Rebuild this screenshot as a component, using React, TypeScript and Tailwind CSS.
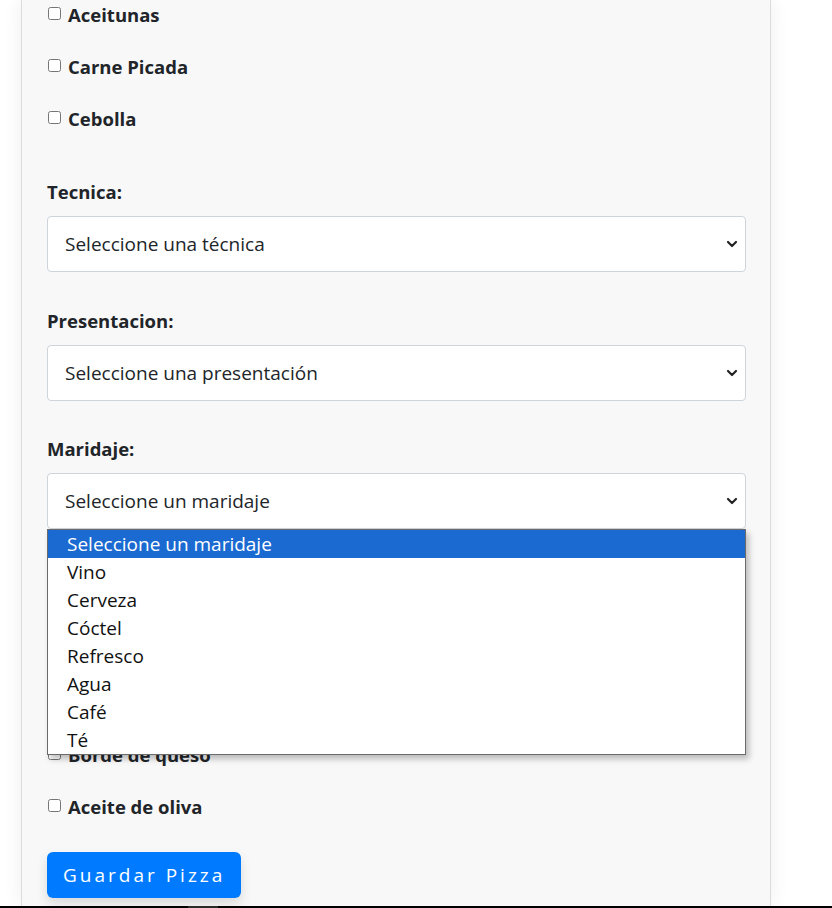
import { ChevronDown } from 'lucide-react'

const font = { fontFamily: '"Open Sans", "Noto Sans", sans-serif' }

const topToppings = ['Aceitunas', 'Carne Picada', 'Cebolla']
const bottomExtras = ['Borde de queso', 'Aceite de oliva']
const maridajes = ['Seleccione un maridaje', 'Vino', 'Cerveza', 'Cóctel', 'Refresco', 'Agua', 'Café', 'Té']

function CheckRow({ label }: { label: string }) {
  return (
    <label className="flex items-center h-[52px] gap-[7px] text-[18.5px] font-bold text-[#212529]">
      <input type="checkbox" className="ml-px w-[13px] h-[13px] -mt-1" />
      <span>{label}</span>
    </label>
  )
}

function SelectField({ label, placeholder, className }: { label: string; placeholder: string; className?: string }) {
  return (
    <div className={className}>
      <p className="h-6 leading-6 text-[18.5px] font-bold text-[#212529]">{label}</p>
      <div className="mt-3 h-14 flex items-center justify-between rounded-[4px] border border-[#ced4da] bg-white pl-[17px] pr-[5px] text-[19px] text-[#212529]">
        <span>{placeholder}</span>
        <ChevronDown className="w-4 h-4 text-[#222]" strokeWidth={3.2} />
      </div>
    </div>
  )
}

export default function App() {
  return (
    <div className="w-[832px] h-[908px] bg-white flex flex-col overflow-hidden" style={font}>
      <div className="flex-1 overflow-hidden pl-[21px]">
        <div className="relative flow-root w-[750px] h-full bg-[#f8f8f8] border-x border-[#dcdcdc] shadow-[0_0_18px_rgba(0,0,0,0.07)] pl-[25px] pr-[24px]">
          <div className="-mt-[11px]">
            {topToppings.map((t) => (
              <CheckRow key={t} label={t} />
            ))}
          </div>

          <SelectField label="Tecnica:" placeholder="Seleccione una técnica" className="mt-[35px]" />
          <SelectField label="Presentacion:" placeholder="Seleccione una presentación" className="mt-[37px]" />
          <SelectField label="Maridaje:" placeholder="Seleccione un maridaje" className="mt-9" />

          {/* rows hidden under the open dropdown */}
          <div className="h-[200px]" />
          {bottomExtras.map((t) => (
            <CheckRow key={t} label={t} />
          ))}

          <button className="mt-[19px] h-[46px] px-4 rounded-[6px] bg-[#007bff] text-white text-[19px] tracking-[3px] shadow-[0_6px_12px_rgba(0,0,0,0.12)]">
            Guardar Pizza
          </button>

          {/* opened native dropdown for Maridaje */}
          <ul className="absolute left-[25px] top-[529px] w-[699px] bg-white border border-[#6b6b6b] shadow-[3px_4px_6px_rgba(0,0,0,0.25)] text-[19px] text-[#111]">
            {maridajes.map((m, i) => (
              <li
                key={m}
                className={i === 0 ? 'h-7 leading-7 pl-[19px] bg-[#1b6ad1] text-white' : 'h-7 leading-7 pl-[19px]'}
              >
                {m}
              </li>
            ))}
          </ul>
        </div>
      </div>
      <div className="h-[2px] flex">
        <div className="w-[188px] bg-black" />
        <div className="w-[30px] bg-[#2a2a2a]" />
        <div className="flex-1 bg-black" />
      </div>
    </div>
  )
}
